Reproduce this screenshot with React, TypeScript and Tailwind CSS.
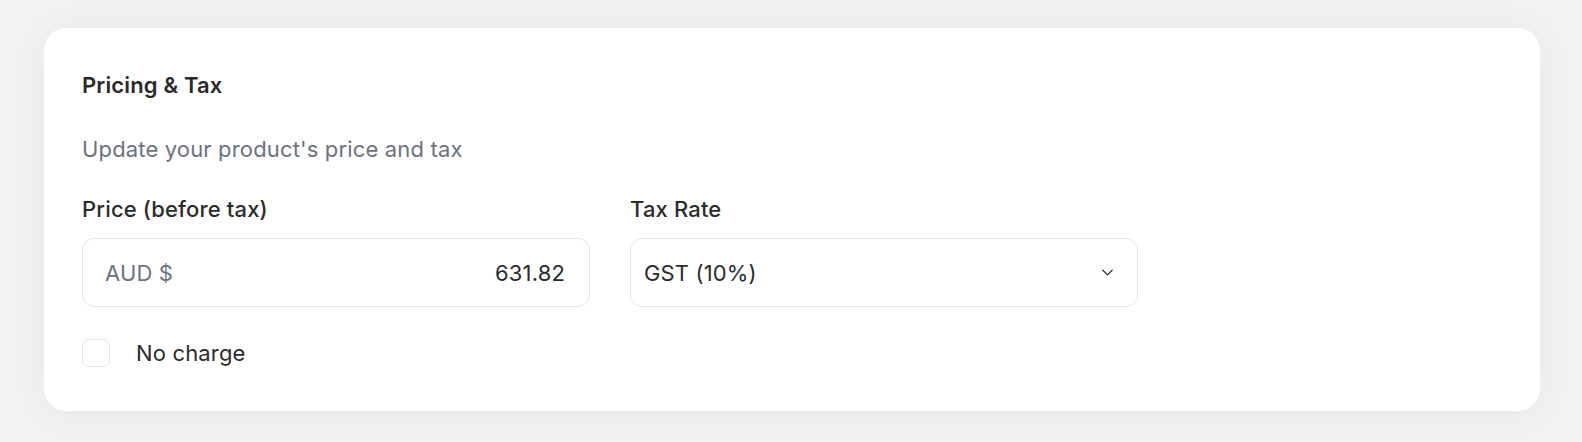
import { ChevronDown } from "lucide-react";

export default function App() {
  return (
    <div className="min-h-[442px] bg-[#f2f2f2] pl-[44px] pr-[42px] pt-[28px] font-['Inter',sans-serif] text-[22px] leading-[30px] tracking-[0.007em] text-[#2b2b2b]">
      <div className="rounded-[22px] bg-white px-[38px] pb-[43px] pt-[42px] shadow-[0_2px_40px_rgba(0,0,0,0.05)]">
        <h2 className="font-semibold text-[#2a2a2a]">Pricing &amp; Tax</h2>
        <p className="mt-[34px] text-[#6b7280]">Update your product's price and tax</p>

        <div className="mt-[30px] grid w-[1056px] grid-cols-2 gap-[40px]">
          <div>
            <label className="block font-medium">Price (before tax)</label>
            <div className="mt-[14px] flex h-[69px] items-center justify-between rounded-[12px] border border-[#e4e4e7] pl-[22px] pr-[24px]">
              <span className="text-[#6b7280]">AUD $</span>
              <span>631.82</span>
            </div>
          </div>
          <div>
            <label className="block font-medium">Tax Rate</label>
            <div className="mt-[14px] flex h-[69px] items-center justify-between rounded-[12px] border border-[#e4e4e7] pl-[13px] pr-[20px]">
              <span>GST (10%)</span>
              <ChevronDown size={19} strokeWidth={1.7} className="text-[#2b2b2b]" />
            </div>
          </div>
        </div>

        <div className="mt-[31px] flex items-center gap-[26px]">
          <div className="h-[28px] w-[28px] rounded-[7px] border border-[#e4e4e7] bg-white" />
          <span>No charge</span>
        </div>
      </div>
    </div>
  );
}
